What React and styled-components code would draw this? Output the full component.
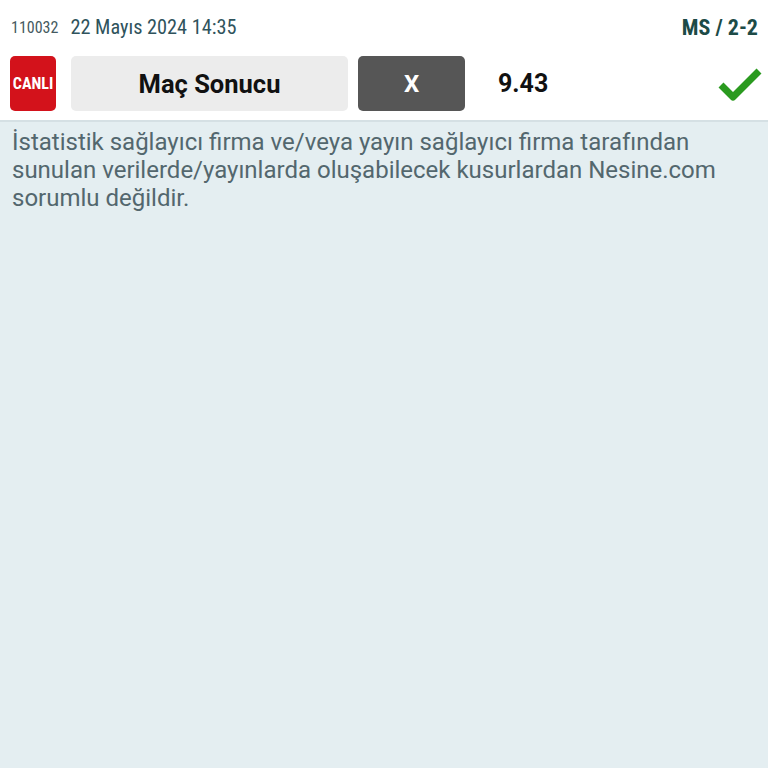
import React from 'react'
import styled, {createGlobalStyle} from 'styled-components'

const GlobalStyle = createGlobalStyle`
  html, body {
    margin: 0;
    padding: 0;
    background: #e4eef1;
  }
  body {
    font-family: 'Roboto Condensed', 'Liberation Sans Narrow', Roboto, sans-serif;
  }
`

const Page = styled.div`
  width: 768px;
  height: 768px;
  display: flex;
  flex-direction: column;
  background: #e4eef1;
`

const Card = styled.div`
  background: #fff;
  border-bottom: 2px solid #d5e0e4;
`

const MetaRow = styled.div`
  height: 50px;
  display: flex;
  align-items: center;
  padding: 4px 10px 0 11px;
  box-sizing: border-box;
`

const EventCode = styled.span`
  font-size: 16px;
  color: #445a60;
  margin-right: 12px;
`

const EventDate = styled.span`
  font-size: 20.3px;
  color: #2f535c;
  flex: 1;
`

const Result = styled.span`
  font-size: 22px;
  font-weight: 700;
  color: #1d4b47;
`

const BetRow = styled.div`
  display: flex;
  align-items: center;
  padding: 6px 6px 9px 10px;
`

const Box = styled.div`
  height: 55px;
  border-radius: 5px;
  display: flex;
  align-items: center;
  justify-content: center;
  font-family: ${({condensed}) =>
    condensed ? "'Roboto Condensed', Roboto, sans-serif" : 'Roboto, sans-serif'};
  font-weight: 700;
  width: ${({w}) => w}px;
  margin-right: ${({gap}) => gap || 0}px;
  background: ${({bg}) => bg};
  color: ${({fg}) => fg};
  font-size: ${({size}) => size}px;
`

const Odds = styled.span`
  font-family: Roboto, sans-serif;
  font-size: 25px;
  font-weight: 700;
  color: #111;
  margin-left: 33px;
  flex: 1;
`

const Check = styled.svg`
  width: 44px;
  height: 36px;
`

const Notice = styled.p`
  margin: 0;
  padding: 6px 12px 0 12px;
  font-family: Roboto, sans-serif;
  font-size: 24px;
  line-height: 28px;
  color: #53676e;
`

const App = () => (
  <Page>
    <GlobalStyle />
    <Card>
      <MetaRow>
        <EventCode>110032</EventCode>
        <EventDate>22 Mayıs 2024 14:35</EventDate>
        <Result>MS / 2-2</Result>
      </MetaRow>
      <BetRow>
        <Box condensed w={46} gap={15} bg="#d3121b" fg="#fff" size={16}>
          CANLI
        </Box>
        <Box w={277} gap={10} bg="#ececec" fg="#111" size={25.5}>
          Maç Sonucu
        </Box>
        <Box w={107} bg="#565656" fg="#fff" size={24}>
          X
        </Box>
        <Odds>9.43</Odds>
        <Check viewBox="0 0 44 36">
          <path
            d="M3 19 L15 31 L41 5"
            fill="none"
            stroke="#2a9a1f"
            strokeWidth="7"
            strokeLinejoin="round"
          />
        </Check>
      </BetRow>
    </Card>
    <Notice>
      İstatistik sağlayıcı firma ve/veya yayın sağlayıcı firma tarafından
      sunulan verilerde/yayınlarda oluşabilecek kusurlardan Nesine.com
      sorumlu değildir.
    </Notice>
  </Page>
)

export default App
